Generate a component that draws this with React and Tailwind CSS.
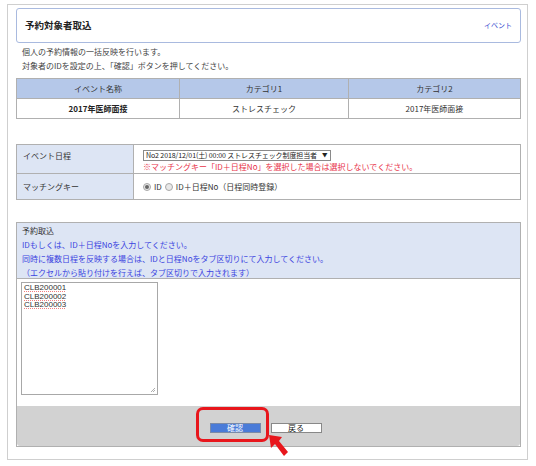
import React from 'react';

const font = { fontFamily: '"Noto Sans CJK JP", "Noto Sans", sans-serif' };

const Radio = ({ checked }) => (
  <span className="inline-flex items-center justify-center w-[8px] h-[8px] rounded-full border border-[#a8a8a8] bg-[#e8e8e8]">
    {checked && <span className="w-[4px] h-[4px] rounded-full bg-[#666]" />}
  </span>
);

const App = () => {
  return (
    <div className="w-[536px] h-[466px] bg-white pt-[4px] pl-[7px]" style={font}>
      <div className="w-[521px] h-[456px] border border-[#cfcfcf] pl-[8px] pr-[6px] pt-[3px] text-[#333]">
        {/* header */}
        <div className="h-[35px] rounded-[3px] border border-[#a9badf] flex items-center justify-between px-[8px]">
          <span className="text-[9.5px] font-bold text-[#222]">予約対象者取込</span>
          <span className="text-[7px] text-[#3a4fd0]">イベント</span>
        </div>

        <div className="px-[6px] pt-[2px] text-[8px] leading-[14px] text-[#444]">
          <p>個人の予約情報の一括反映を行います。</p>
          <p>対象者のIDを設定の上、「確認」ボタンを押してください。</p>
        </div>

        {/* event table */}
        <table className="mt-[5px] w-full border-collapse text-[8px] text-[#333]">
          <tbody>
            <tr className="h-[20px] bg-[#b5c8e9]">
              <td className="w-[163px] border border-[#b0b0b0] text-center">イベント名称</td>
              <td className="w-[169px] border border-[#b0b0b0] text-center">カテゴリ1</td>
              <td className="border border-[#b0b0b0] text-center">カテゴリ2</td>
            </tr>
            <tr className="h-[20px] bg-white">
              <td className="border border-[#b0b0b0] text-center font-bold text-[#222]">2017年医師面接</td>
              <td className="border border-[#b0b0b0] text-center">ストレスチェック</td>
              <td className="border border-[#b0b0b0] text-center">2017年医師面接</td>
            </tr>
          </tbody>
        </table>

        {/* settings table */}
        <table className="mt-[25px] w-full border-collapse text-[8px] text-[#333]">
          <tbody>
            <tr className="h-[27px]">
              <td className="w-[117px] align-top bg-[#dde5f4] border border-[#b0b0b0] px-[6px] pt-[5px]">イベント日程</td>
              <td className="border border-[#b0b0b0] px-[9px] pt-[4px] align-top">
                <div className="inline-flex items-center h-[11px] border border-[#8a8a8a] px-[2px] text-[7px] leading-none text-[#222] gap-[5px]">
                  <span className="tracking-[-0.1px]">No2 2018/12/01(土) 00:00 ストレスチェック制度担当者</span>
                  <span className="text-[5.5px]">▼</span>
                </div>
                <div className="text-[#e8344a] leading-[12px]">※マッチングキー「ID＋日程No」を選択した場合は選択しないでください。</div>
              </td>
            </tr>
            <tr className="h-[26px]">
              <td className="bg-[#dde5f4] border border-[#b0b0b0] px-[6px]">マッチングキー</td>
              <td className="border border-[#b0b0b0] px-[9px]">
                <div className="flex items-center gap-[3px]">
                  <Radio checked />
                  <span>ID</span>
                  <Radio />
                  <span>ID＋日程No（日程同時登録）</span>
                </div>
              </td>
            </tr>
          </tbody>
        </table>

        {/* import section */}
        <div className="mt-[22px] border border-[#b0b0b0]">
          <div className="h-[56px] bg-[#dde5f4] border-b border-[#b0b0b0] px-[5px] pt-[1px] text-[8px] leading-[14px]">
            <p className="text-[#333]">予約取込</p>
            <p className="text-[#3b44e0]">IDもしくは、ID＋日程Noを入力してください。</p>
            <p className="text-[#3b44e0]">同時に複数日程を反映する場合は、IDと日程Noをタブ区切りにて入力してください。</p>
            <p className="text-[#3b44e0]">（エクセルから貼り付けを行えば、タブ区切りで入力されます）</p>
          </div>
          <div className="h-[127px] px-[4px] pt-[3px]">
            <div className="relative w-[137px] h-[113px] border border-[#a8a8a8] px-[2px] pt-[1px] text-[8px] leading-[8.5px] text-[#333]" style={{ fontFamily: '"Liberation Sans", "Noto Sans CJK JP", sans-serif' }}>
              <p className="underline decoration-dotted decoration-[#f08080] underline-offset-[1px]">CLB200001</p>
              <p className="underline decoration-dotted decoration-[#f08080] underline-offset-[1px]">CLB200002</p>
              <p className="underline decoration-dotted decoration-[#f08080] underline-offset-[1px]">CLB200003</p>
              <svg className="absolute right-[1px] bottom-[1px]" width="6" height="6" viewBox="0 0 6 6">
                <path d="M5 1 L1 5 M5 3 L3 5" stroke="#999" strokeWidth="0.8" />
              </svg>
            </div>
          </div>
          <div className="relative h-[40px] bg-[#d2d2d2] rounded-b-[3px] flex items-center justify-center gap-[10px] pt-[4px] pr-[6px]">
            <div className="w-[51px] h-[10px] bg-[#4a7bd8] border border-[#7a8aa8] text-white text-[8px] leading-[8px] flex items-center justify-center">確認</div>
            <div className="w-[51px] h-[10px] bg-white border border-[#888] text-[#222] text-[8px] leading-[8px] flex items-center justify-center">戻る</div>
            <div className="absolute left-[179px] top-[1px] w-[73px] h-[35px] rounded-[7px] border-[3px] border-[#e8161c]" />
            <svg className="absolute left-[251px] top-[28px]" width="24" height="26" viewBox="0 0 24 26">
              <path d="M1 1 L3 14 L7 10 L16 22 L20 18 L11 7 L14 3 Z" fill="#e8161c" />
            </svg>
          </div>
        </div>
      </div>
    </div>
  );
};

export default App;
